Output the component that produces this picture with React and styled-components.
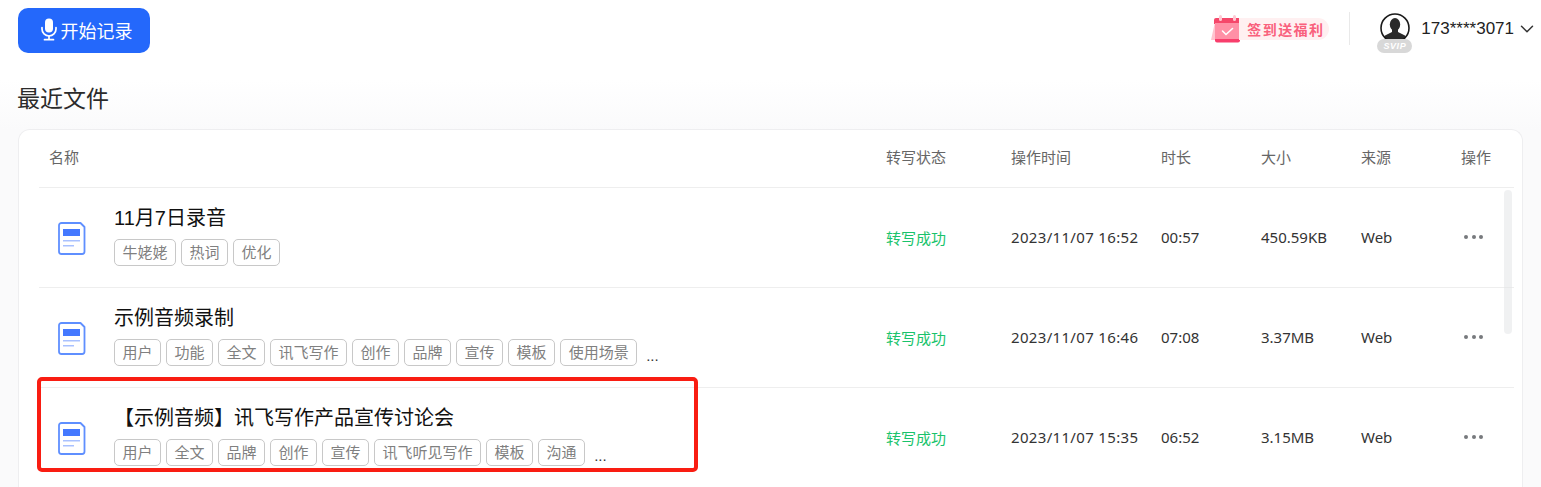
import React from "react";
import styled, { createGlobalStyle } from "styled-components";
import { ChevronDown } from "lucide-react";

const Global = createGlobalStyle`
  html, body { margin: 0; padding: 0; background: #fff; }
  body { font-family: "Liberation Sans", "Noto Sans CJK SC", sans-serif; overflow: hidden; }
`;

const Page = styled.div`
  position: relative;
  height: 487px;
  overflow: hidden;
  padding: 8px 18px 0;
  box-sizing: border-box;
  background: linear-gradient(#fff 0, #fff 80px, #fafafb 130px);
`;

const TopBar = styled.header`
  display: flex;
  align-items: flex-start;
  justify-content: space-between;
  height: 45px;
`;

const RecordButton = styled.button`
  display: flex;
  align-items: center;
  justify-content: center;
  gap: 4px;
  width: 132px;
  height: 45px;
  padding: 0 0 2px 5px;
  border: 0;
  border-radius: 10px;
  background: #2468fb;
  color: #fff;
  font-family: "Noto Sans CJK SC", sans-serif;
  font-size: 18px;
`;

const TopRight = styled.div`
  display: flex;
  align-items: flex-start;
  margin-right: -14.5px;
`;

const SignIn = styled.div`
  display: flex;
  align-items: center;
  height: 30px;
  margin-top: 6px;
`;

const SignPill = styled.span`
  margin-left: -4px;
  padding: 0 5px 0 8px;
  height: 22px;
  line-height: 22px;
  border-radius: 0 11px 11px 0;
  background: #fff0f1;
  color: #f9617d;
  font-family: "Noto Sans CJK SC", sans-serif;
  font-size: 14px;
  font-weight: 700;
  letter-spacing: 1.4px;
  white-space: nowrap;
`;

const Divider = styled.div`
  width: 1px;
  height: 33px;
  margin: 4px 28px 0 20px;
  background: #e9e9e9;
`;

const AvatarWrap = styled.div`
  position: relative;
  width: 30px;
  height: 30px;
  margin: 5px 11px 0 2px;
`;

const SvipBadge = styled.span`
  position: absolute;
  left: -3px;
  top: 26px;
  width: 35px;
  height: 14px;
  border-radius: 7px;
  background: #d8d8d8;
  color: #fff;
  font-size: 9px;
  font-weight: 700;
  font-style: italic;
  line-height: 14px;
  text-align: center;
  letter-spacing: 0.6px;
`;

const UserName = styled.div`
  display: flex;
  align-items: center;
  gap: 1.5px;
  margin-top: 10px;
  height: 22px;
  font-size: 17px;
  color: #222;
`;

const PageTitle = styled.h1`
  margin: 29px 0 17px -1px;
  height: 30px;
  font-family: "Noto Sans CJK SC", sans-serif;
  font-size: 23px;
  font-weight: 400;
  line-height: 30px;
  color: #2b2b2b;
`;

const Card = styled.section`
  position: relative;
  height: 400px;
  padding: 0 8px 0 20px;
  border: 1px solid #eeeef0;
  border-bottom: 0;
  border-radius: 12px 12px 0 0;
  background: #fff;
`;

const columns = "837px 125px 150px 100px 100px 100px 1fr";

const HeadRow = styled.div`
  display: grid;
  grid-template-columns: ${columns};
  align-items: center;
  height: 53px;
  padding: 0 0 4px 10px;
  border-bottom: 1px solid #eeeeee;
  font-family: "Noto Sans CJK SC", sans-serif;
  font-size: 15px;
  color: #666;
`;

const Row = styled.div`
  display: grid;
  grid-template-columns: ${columns};
  align-items: center;
  height: 99px;
  padding-left: 10px;
  border-bottom: 1px solid #eeeeee;
`;

const NameCell = styled.div`
  display: flex;
  align-items: center;
`;

const DocWrap = styled.div`
  flex: none;
  display: flex;
  width: 28px;
  height: 33px;
  margin: 1px 28px 0 9px;
`;

const NameText = styled.div`
  display: flex;
  flex-direction: column;
  gap: 7px;
  margin-top: -4px;
`;

const FileTitle = styled.div`
  height: 27px;
  font-size: 20px;
  line-height: 27px;
  color: #111;
  white-space: nowrap;
`;

const Tags = styled.div`
  display: flex;
  align-items: center;
  gap: 5px;
`;

const Tag = styled.span`
  box-sizing: border-box;
  height: 27px;
  padding: 0 7.5px;
  border: 1px solid #c8c8c8;
  border-radius: 5px;
  font-family: "Noto Sans CJK SC", sans-serif;
  font-size: 15px;
  line-height: 24px;
  color: #808080;
  white-space: nowrap;
`;

const More = styled.span`
  margin-left: 4px;
  margin-top: 6px;
  font-size: 15px;
  color: #333;
`;

const Status = styled.div`
  font-family: "Noto Sans CJK SC", sans-serif;
  font-size: 15px;
  color: #19c36b;
`;

const Cell = styled.div`
  font-family: "Noto Sans", sans-serif;
  font-size: 15px;
  line-height: 20px;
  margin-top: -1px;
  color: #333;
  white-space: nowrap;
  letter-spacing: ${(p) => (p.$wide ? "0.33px" : "0")};
`;

const Dots = styled.div`
  display: flex;
  gap: 3.5px;
  margin: -1px 0 0 3px;
`;

const Dot = styled.span`
  width: 4px;
  height: 4px;
  border-radius: 50%;
  background: #77797d;
`;

const ScrollThumb = styled.div`
  position: absolute;
  right: 10px;
  top: 60px;
  width: 8px;
  height: 144px;
  border-radius: 4px;
  background: rgba(228, 230, 232, 0.55);
`;

const Callout = styled.div`
  position: absolute;
  left: 37px;
  top: 377px;
  width: 661px;
  height: 95px;
  box-sizing: border-box;
  border: 4px solid #f91d12;
  border-radius: 5px;
  pointer-events: none;
`;

const MicIcon = () => (
  <svg width="16" height="23" viewBox="0 0 16 23" fill="none">
    <rect x="4" y="0.5" width="8" height="14" rx="4" fill="#fff" />
    <path d="M1 9.5v1.5a7 7 0 0 0 14 0V9.5" stroke="#fff" strokeWidth="1.7" strokeLinecap="round" />
    <path d="M8 18v3.5M3.5 21.7h9" stroke="#fff" strokeWidth="1.7" strokeLinecap="round" />
  </svg>
);

const CalendarIcon = () => (
  <svg width="32" height="30" viewBox="0 0 32 30">
    <path d="M4 8h28l-3 18H0z" fill="#ffc4cf" />
    <path d="M5 4h23a2 2 0 0 1 2 2v4H3V6a2 2 0 0 1 2-2z" fill="#f5476a" />
    <path d="M4 9h26l-1.5 17H4z" fill="#ff90a6" />
    <path d="M4 25h25v1.5a2 2 0 0 1-2 2H6a2 2 0 0 1-2-2z" fill="#f83e6c" />
    <rect x="8" y="1" width="3" height="6" rx="1.5" fill="#ffc9d3" />
    <rect x="22" y="1" width="3" height="6" rx="1.5" fill="#ffc9d3" />
    <path d="M11.5 17l3.5 3.5 6.5-6" stroke="#fff" strokeWidth="1.6" fill="none" strokeLinecap="round" />
  </svg>
);

const AvatarIcon = () => (
  <svg width="30" height="30" viewBox="0 0 30 30">
    <defs>
      <clipPath id="avatar-clip"><circle cx="15" cy="15" r="14" /></clipPath>
    </defs>
    <circle cx="15" cy="15" r="14" fill="#fff" />
    <g clipPath="url(#avatar-clip)" fill="#2a2a2a">
      <ellipse cx="15" cy="11.5" rx="5.2" ry="6.5" />
      <path d="M12 16h6v3l7 3.5 3 7.5H2l3-7.500 7-3.500z" />
    </g>
    <circle cx="15" cy="15" r="14" fill="none" stroke="#1a1a1a" strokeWidth="1.6" />
  </svg>
);

const DocIcon = () => (
  <svg width="28" height="33" viewBox="0 0 28 33" fill="none">
    <path d="M3.500 1h19l4 4v24.500a2.500 2.500 0 0 1-2.500 2.500H3.500A2.500 2.500 0 0 1 1 29.500v-26A2.500 2.500 0 0 1 3.500 1z" fill="#fff" stroke="#5f8fff" strokeWidth="1.800" strokeLinejoin="round" />
    <rect x="5" y="7" width="17" height="7" fill="#4579ff" />
    <rect x="5" y="18" width="17" height="1.500" fill="#a9c1ff" />
    <rect x="5" y="23" width="11" height="1.500" fill="#a9c1ff" />
  </svg>
);

const files = [
  { name: "11月7日录音", tags: ["牛姥姥", "热词", "优化"], time: "2023/11/07 16:52", dur: "00:57", size: "450.59KB" },
  { name: "示例音频录制", tags: ["用户", "功能", "全文", "讯飞写作", "创作", "品牌", "宣传", "模板", "使用场景"], more: true, time: "2023/11/07 16:46", dur: "07:08", size: "3.37MB" },
  { name: "【示例音频】讯飞写作产品宣传讨论会", tags: ["用户", "全文", "品牌", "创作", "宣传", "讯飞听见写作", "模板", "沟通"], more: true, time: "2023/11/07 15:35", dur: "06:52", size: "3.15MB" },
];

export default function App() {
  return (
    <>
      <Global />
      <Page>
        <TopBar>
          <RecordButton><MicIcon />开始记录</RecordButton>
          <TopRight>
            <SignIn><CalendarIcon /><SignPill>签到送福利</SignPill></SignIn>
            <Divider />
            <AvatarWrap><AvatarIcon /><SvipBadge>SVIP</SvipBadge></AvatarWrap>
            <UserName>173****3071<ChevronDown size={22} strokeWidth={1.6} color="#333" /></UserName>
          </TopRight>
        </TopBar>
        <PageTitle>最近文件</PageTitle>
        <Card>
          <HeadRow>
            <span>名称</span><span>转写状态</span><span>操作时间</span><span>时长</span><span>大小</span><span>来源</span><span>操作</span>
          </HeadRow>
          {files.map((f) => (
            <Row key={f.name}>
              <NameCell>
                <DocWrap><DocIcon /></DocWrap>
                <NameText>
                  <FileTitle>{f.name}</FileTitle>
                  <Tags>
                    {f.tags.map((t) => <Tag key={t}>{t}</Tag>)}
                    {f.more && <More>...</More>}
                  </Tags>
                </NameText>
              </NameCell>
              <Status>转写成功</Status>
              <Cell $wide>{f.time}</Cell>
              <Cell>{f.dur}</Cell>
              <Cell>{f.size}</Cell>
              <Cell>Web</Cell>
              <Dots><Dot /><Dot /><Dot /></Dots>
            </Row>
          ))}
          <ScrollThumb />
        </Card>
        <Callout />
      </Page>
    </>
  );
}
